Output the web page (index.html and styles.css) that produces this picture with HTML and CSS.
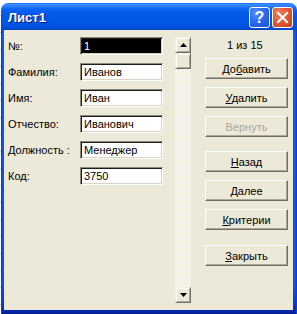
FILE: index.html
```html
<!DOCTYPE html>
<html lang="ru">
<head>
<meta charset="utf-8">
<title>Лист1</title>
<link rel="stylesheet" href="styles.css">
</head>
<body>
<div class="window">
  <div class="titlebar">
    <span class="title">Лист1</span>
    <div class="tb-btns">
      <span class="tb-btn help">?</span>
      <span class="tb-btn close"><svg width="19" height="19" viewBox="0 0 19 19"><path d="M5 5 L14 14 M14 5 L5 14" stroke="#fff" stroke-width="2.2" stroke-linecap="square"/></svg></span>
    </div>
  </div>
  <div class="frame">
    <div class="client">
      <div class="form">
        <span class="label">№:</span><div class="field selected">1</div>
        <span class="label">Фамилия:</span><div class="field">Иванов</div>
        <span class="label">Имя:</span><div class="field">Иван</div>
        <span class="label">Отчество:</span><div class="field">Иванович</div>
        <span class="label">Должность :</span><div class="field">Менеджер</div>
        <span class="label">Код:</span><div class="field">3750</div>
      </div>
      <div class="scrollbar">
        <div class="sb-btn"><svg width="7" height="4" viewBox="0 0 7 4"><path d="M3.5 0 L7 4 L0 4 Z" fill="#000"/></svg></div>
        <div class="sb-thumb"></div>
        <div class="sb-track"></div>
        <div class="sb-btn"><svg width="7" height="4" viewBox="0 0 7 4"><path d="M0 0 L7 0 L3.5 4 Z" fill="#000"/></svg></div>
      </div>
      <div class="actions">
        <div class="counter">1 из 15</div>
        <button class="btn first">До<u>б</u>авить</button>
        <button class="btn"><u>У</u>далить</button>
        <button class="btn disabled">Вернуть</button>
        <button class="btn group"><u>Н</u>азад</button>
        <button class="btn"><u>Д</u>алее</button>
        <button class="btn"><u>К</u>ритерии</button>
        <button class="btn group2"><u>З</u>акрыть</button>
      </div>
    </div>
  </div>
</div>
</body>
</html>
```

FILE: styles.css
```css
html, body {
  margin: 0;
  padding: 0;
}
body {
  background-color: #fff;
  background-image: repeating-linear-gradient(to bottom, transparent 0 15px, #c8c8c8 15px 16px, transparent 16px 17px);
  background-size: 1px 100%;
  background-repeat: no-repeat;
  font-family: "Liberation Sans", Arial, sans-serif;
  font-size: 11px;
  width: 297px;
  height: 314px;
  overflow: hidden;
}
.window {
  margin: 3px 0 0 1px;
  width: 296px;
  height: 311px;
  display: flex;
  flex-direction: column;
}
.titlebar {
  height: 27px;
  flex: none;
  border-radius: 7px 7px 0 0;
  background: linear-gradient(to bottom, #0a5de8 0px, #3d91ff 1px, #2d82ff 3px, #0b63f2 6px, #0059e8 11px, #0056e5 19px, #0053e0 23px, #004acf 26px, #0040bc 27px);
  display: flex;
  align-items: center;
  padding: 0 4px 0 7px;
  box-sizing: border-box;
}
.title {
  color: #fff;
  font-weight: bold;
  font-size: 13px;
  text-shadow: 1px 1px #0a1883;
  flex: 1;
  margin-top: 1px;
}
.tb-btns {
  display: flex;
  gap: 2px;
  margin-top: 2px;
}
.tb-btn {
  width: 21px;
  height: 21px;
  box-sizing: border-box;
  border: 1px solid #fff;
  border-radius: 3px;
  display: flex;
  align-items: center;
  justify-content: center;
}
.help {
  background: radial-gradient(circle at 30% 25%, #4e8df8 0, #2a68e8 50%, #1a54d6 100%);
  color: #fff;
  font-weight: bold;
  font-size: 16px;
  font-family: "Liberation Sans", Arial, sans-serif;
}
.close {
  background: radial-gradient(circle at 30% 25%, #ec7d5c 0, #df5330 55%, #c93e1c 100%);
}
.frame {
  flex: 1;
  display: flex;
  padding: 0 4px 4px 3px;
  background: linear-gradient(to bottom, #0a5be8, #0853e0 90%, #0638c8 97%, #00229c);
  box-shadow: inset 1px 0 #0a3fcf, inset -1px 0 #0a3fcf, inset 0 -1px #001a8e;
}
.client {
  flex: 1;
  background: #ece9d8;
  display: flex;
  align-items: flex-start;
  padding: 7px 0 0 4px;
}
.form {
  display: grid;
  grid-template-columns: 72px 83px;
  grid-auto-rows: 18px;
  row-gap: 8px;
}
.label {
  line-height: 18px;
  color: #000;
  white-space: nowrap;
}
.field {
  box-sizing: border-box;
  height: 18px;
  border: 1px solid;
  border-color: #8a877b #fff #fff #8a877b;
  box-shadow: inset 1px 1px #1c1c1c, inset -1px -1px #d8d5c6;
  background: #fff;
  padding: 1px 0 0 3px;
  line-height: 14px;
  color: #000;
}
.field.selected {
  background: #000;
  color: #fff;
}
.scrollbar {
  margin-left: 12px;
  width: 16px;
  height: 266px;
  display: flex;
  flex-direction: column;
}
.sb-btn, .sb-thumb {
  box-sizing: border-box;
  height: 16px;
  flex: none;
  background: #ece9d8;
  border: 1px solid;
  border-color: #f1efe2 #716f64 #716f64 #f1efe2;
  box-shadow: inset 1px 1px #fff, inset -1px -1px #aca899;
  display: flex;
  align-items: center;
  justify-content: center;
}
.sb-thumb {
  height: 16px;
}
.sb-track {
  flex: 1;
  background-color: #ece9d8;
  background-image: repeating-conic-gradient(#fdfdfb 0 25%, #ece9d8 0 50%);
  background-size: 2px 2px;
}
.actions {
  margin-left: 14px;
  width: 83px;
  display: flex;
  flex-direction: column;
}
.counter {
  margin-top: 2px;
  margin-left: 22px;
  line-height: 13px;
  color: #000;
}
.btn {
  font-family: "Liberation Sans", Arial, sans-serif;
  font-size: 11px;
  color: #000;
  height: 21px;
  width: 83px;
  padding: 0;
  margin: 8px 0 0 0;
  box-sizing: border-box;
  background: #ece9d8;
  border: 1px solid;
  border-color: #fff #716f64 #716f64 #fff;
  box-shadow: inset -1px -1px #aca899;
  text-align: center;
  line-height: 18px;
}
.btn.first {
  margin-top: 6px;
}
.btn.group {
  margin-top: 14px;
}
.btn.group2 {
  margin-top: 15px;
}
.btn.disabled {
  color: #aca899;
}
.btn u {
  text-decoration: underline;
  text-underline-offset: 1px;
}
```
